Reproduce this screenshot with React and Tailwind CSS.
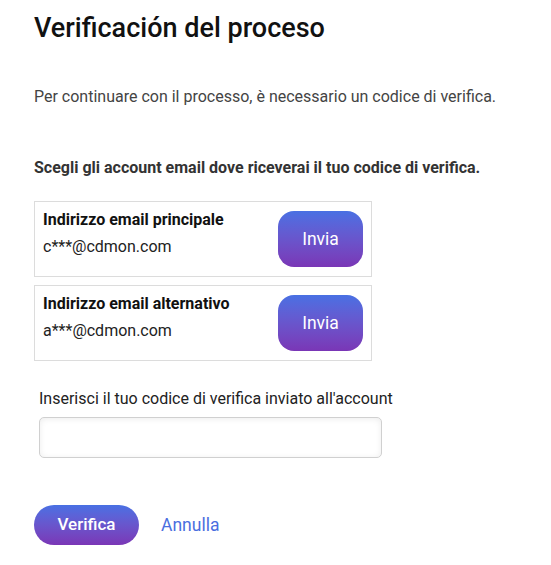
import React, { useState } from "react";

function EmailOption({ label, email }) {
  return (
    <div className="w-[338px] h-[76px] border border-[#dcdcdc] flex items-start justify-between pl-2 pr-2">
      <div className="flex flex-col pt-[8px]">
        <span className="text-[16px] font-bold text-[#111] leading-[20px]">{label}</span>
        <span className="text-[16px] text-[#222] leading-[20px] mt-[7px]">{email}</span>
      </div>
      <button className="self-center w-[85px] h-[56px] rounded-[16px] bg-gradient-to-b from-[#4870e3] to-[#7a36b6] text-white text-[17.5px]">
        Invia
      </button>
    </div>
  );
}

export default function App() {
  const [code, setCode] = useState("");

  return (
    <div className="min-h-screen bg-white px-[34px] pt-[12px] font-['Roboto',sans-serif]">
      <h1 className="text-[27px] font-medium text-[#111] leading-[32px]">Verificación del proceso</h1>
      <p className="mt-[43px] text-[16px] text-[#444] leading-[20px]">
        Per continuare con il processo, è necessario un codice di verifica.
      </p>
      <p className="mt-[51px] text-[16px] font-bold text-[#333] leading-[20px]">
        Scegli gli account email dove riceverai il tuo codice di verifica.
      </p>
      <div className="mt-[23px] flex flex-col gap-[8px]">
        <EmailOption label="Indirizzo email principale" email="c***@cdmon.com" />
        <EmailOption label="Indirizzo email alternativo" email="a***@cdmon.com" />
      </div>
      <div className="mt-[28px] pl-[5px]">
        <label className="block text-[16px] text-[#222] leading-[20px]">
          Inserisci il tuo codice di verifica inviato all'account
        </label>
        <input
          value={code}
          onChange={(e) => setCode(e.target.value)}
          className="mt-[8px] w-[343px] h-[41px] border border-[#d0d0d0] rounded-[5px] shadow-[inset_0_1px_6px_rgba(0,0,0,0.08)] px-2 outline-none"
        />
      </div>
      <div className="mt-[47px] flex items-center gap-[22px]">
        <button className="w-[105px] h-[40px] rounded-full bg-gradient-to-b from-[#4870e3] to-[#7a36b6] text-white text-[17px] font-medium">
          Verifica
        </button>
        <span className="text-[17.5px] text-[#4a6ee0]">Annulla</span>
      </div>
    </div>
  );
}
